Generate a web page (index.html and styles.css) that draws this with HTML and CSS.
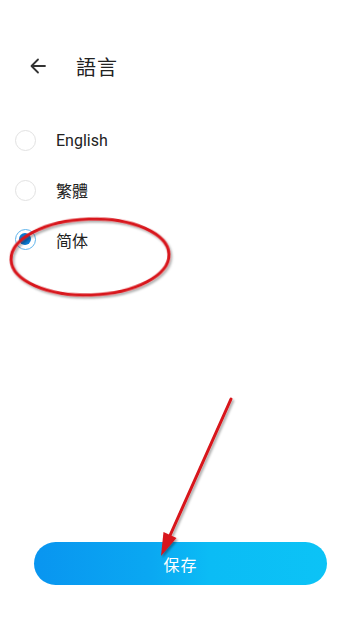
FILE: index.html
```html
<!DOCTYPE html>
<html>
<head>
<meta charset="utf-8">
<link rel="stylesheet" href="styles.css">
</head>
<body>
<div class="page">
  <header class="topbar">
    <svg class="back" width="20" height="20" viewBox="0 0 20 20"><path d="M17 10H4M10 3.5L3.5 10L10 16.5" fill="none" stroke="#333" stroke-width="1.8" stroke-linecap="round" stroke-linejoin="round"/></svg>
    <h1 class="title">語言</h1>
  </header>
  <ul class="options">
    <li class="option"><span class="radio"></span><span class="label">English</span></li>
    <li class="option"><span class="radio"></span><span class="label">繁體</span></li>
    <li class="option"><span class="radio checked"></span><span class="label">简体</span></li>
  </ul>
  <div class="spacer"></div>
  <div class="footer">
    <button class="save">保存</button>
  </div>
  <svg class="annot" width="360" height="640" viewBox="0 0 360 640">
    <defs>
      <filter id="sh" x="-20%" y="-20%" width="140%" height="140%"><feDropShadow dx="1.5" dy="2" stdDeviation="1.2" flood-color="#000" flood-opacity="0.35"/></filter>
    </defs>
    <ellipse cx="90" cy="257" rx="79" ry="38" fill="none" stroke="#d8141a" stroke-width="3" filter="url(#sh)" transform="rotate(-2 90 257)"/>
    <g filter="url(#sh)">
      <line x1="231" y1="399" x2="168" y2="540" stroke="#d8141a" stroke-width="3" stroke-linecap="round"/>
      <polygon points="161,556 163.5,532 176.5,538" fill="#d8141a"/>
    </g>
  </svg>
</div>
</body>
</html>
```
FILE: styles.css
```css
* { box-sizing: border-box; }
html, body { margin: 0; padding: 0; background: #fff; }
body { font-family: Roboto, "Noto Sans CJK TC", "Noto Sans CJK SC", sans-serif; color: #222; }
.page { position: relative; width: 360px; height: 640px; display: flex; flex-direction: column; overflow: hidden; }
.topbar { display: flex; align-items: center; height: 40px; margin-top: 46px; padding-left: 28px; }
.back { flex: none; }
.title { margin: 0 0 0 28px; font-size: 20px; font-weight: 400; color: #222; letter-spacing: 1px; }
.options { list-style: none; margin: 30px 0 0 0; padding: 0; }
.option { display: flex; align-items: center; height: 49.5px; padding-left: 15px; }
.radio { width: 21px; height: 21px; border-radius: 50%; border: 1.5px solid #e2e2e2; flex: none; position: relative; }
.radio.checked { border-color: #5fb4ec; }
.radio.checked::after { content: ""; position: absolute; left: 3px; top: 3px; width: 12px; height: 12px; border-radius: 50%; background: #0a78d1; }
.label { margin-left: 20px; font-size: 16px; color: #222; }
.spacer { flex: 1; }
.footer { padding: 0 33px 55px 34px; }
.save { width: 100%; height: 43px; border: none; border-radius: 22px; background: linear-gradient(90deg, #0995f0 0%, #0aa8f2 40%, #0bbcf5 60%, #0cc3f6 100%); color: #fff; font-size: 16px; font-family: Roboto, "Noto Sans CJK SC", sans-serif; letter-spacing: 1px; padding: 0; }
.annot { position: absolute; left: 0; top: 0; pointer-events: none; }
```
